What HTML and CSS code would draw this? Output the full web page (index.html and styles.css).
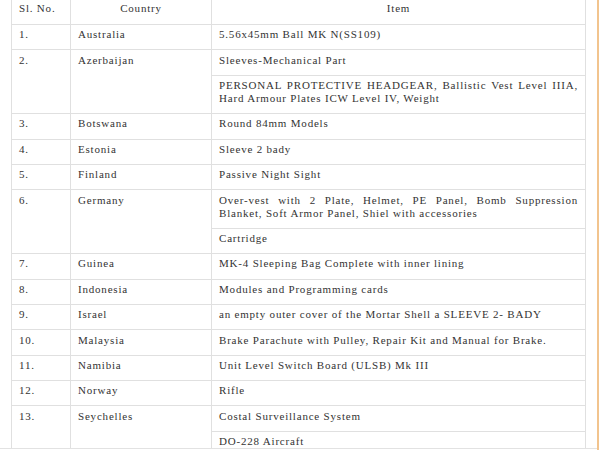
FILE: index.html
```html
<!DOCTYPE html>
<html>
<head>
<meta charset="utf-8">
<link rel="stylesheet" href="styles.css">
</head>
<body>
<div class="frame">
  <div class="content">
    <table class="items">
      <colgroup>
        <col class="c-no">
        <col class="c-country">
        <col class="c-item">
      </colgroup>
      <thead>
        <tr>
          <th class="h-no">Sl. No.</th>
          <th>Country</th>
          <th>Item</th>
        </tr>
      </thead>
      <tbody>
        <tr><td>1.</td><td>Australia</td><td>5.56x45mm Ball MK N(SS109)</td></tr>
        <tr><td rowspan="2">2.</td><td rowspan="2">Azerbaijan</td><td>Sleeves-Mechanical Part</td></tr>
        <tr><td class="just">PERSONAL PROTECTIVE HEADGEAR, Ballistic Vest Level IIIA, Hard Armour Plates ICW Level IV, Weight</td></tr>
        <tr><td>3.</td><td>Botswana</td><td>Round 84mm Models</td></tr>
        <tr><td>4.</td><td>Estonia</td><td>Sleeve 2 bady</td></tr>
        <tr><td>5.</td><td>Finland</td><td>Passive Night Sight</td></tr>
        <tr><td rowspan="2">6.</td><td rowspan="2">Germany</td><td class="just">Over-vest with 2 Plate, Helmet, PE Panel, Bomb Suppression Blanket, Soft Armor Panel, Shiel with accessories</td></tr>
        <tr><td>Cartridge</td></tr>
        <tr><td>7.</td><td>Guinea</td><td>MK-4 Sleeping Bag Complete with inner lining</td></tr>
        <tr><td>8.</td><td>Indonesia</td><td>Modules and Programming cards</td></tr>
        <tr><td>9.</td><td>Israel</td><td>an empty outer cover of the Mortar Shell a SLEEVE 2- BADY</td></tr>
        <tr><td>10.</td><td>Malaysia</td><td>Brake Parachute with Pulley, Repair Kit and Manual for Brake.</td></tr>
        <tr><td>11.</td><td>Namibia</td><td>Unit Level Switch Board (ULSB) Mk III</td></tr>
        <tr><td>12.</td><td>Norway</td><td>Rifle</td></tr>
        <tr><td rowspan="2">13.</td><td rowspan="2">Seychelles</td><td>Costal Surveillance System</td></tr>
        <tr><td>DO-228 Aircraft</td></tr>
      </tbody>
    </table>
  </div>
  <div class="rule"></div>
</div>
</body>
</html>
```
FILE: styles.css
```css
html, body {
  margin: 0;
  padding: 0;
  background: #ffffff;
}

.frame {
  display: flex;
  height: 450px;
  width: 600px;
  overflow: hidden;
}

.content {
  width: 597px;
  height: 448px;
  border-bottom: 1px solid #e2e2e2;
  overflow: hidden;
  flex: none;
}

.rule {
  width: 2px;
  height: 450px;
  background: #f2c48e;
  flex: none;
}

.items {
  margin-left: 11px;
  width: 574px;
  border-collapse: collapse;
  table-layout: fixed;
  font-family: "Times New Roman", "Liberation Serif", "DejaVu Serif", serif;
  font-size: 11px;
  letter-spacing: 0.8px;
  line-height: 13px;
  color: #333333;
}

.c-no { width: 59px; }
.c-country { width: 141px; }
.c-item { width: 374px; }

.items th,
.items td {
  border: 1px solid #e0e0e0;
  padding: 3.3px 7px 8.1px 7px;
  vertical-align: top;
  text-align: left;
  font-family: inherit;
}

.items th {
  font-weight: normal;
  text-align: center;
  border-top: none;
  padding-top: 2px;
  padding-bottom: 9px;
}

.items th.h-no {
  text-align: left;
}

.items td.just {
  text-align: justify;
}
```
